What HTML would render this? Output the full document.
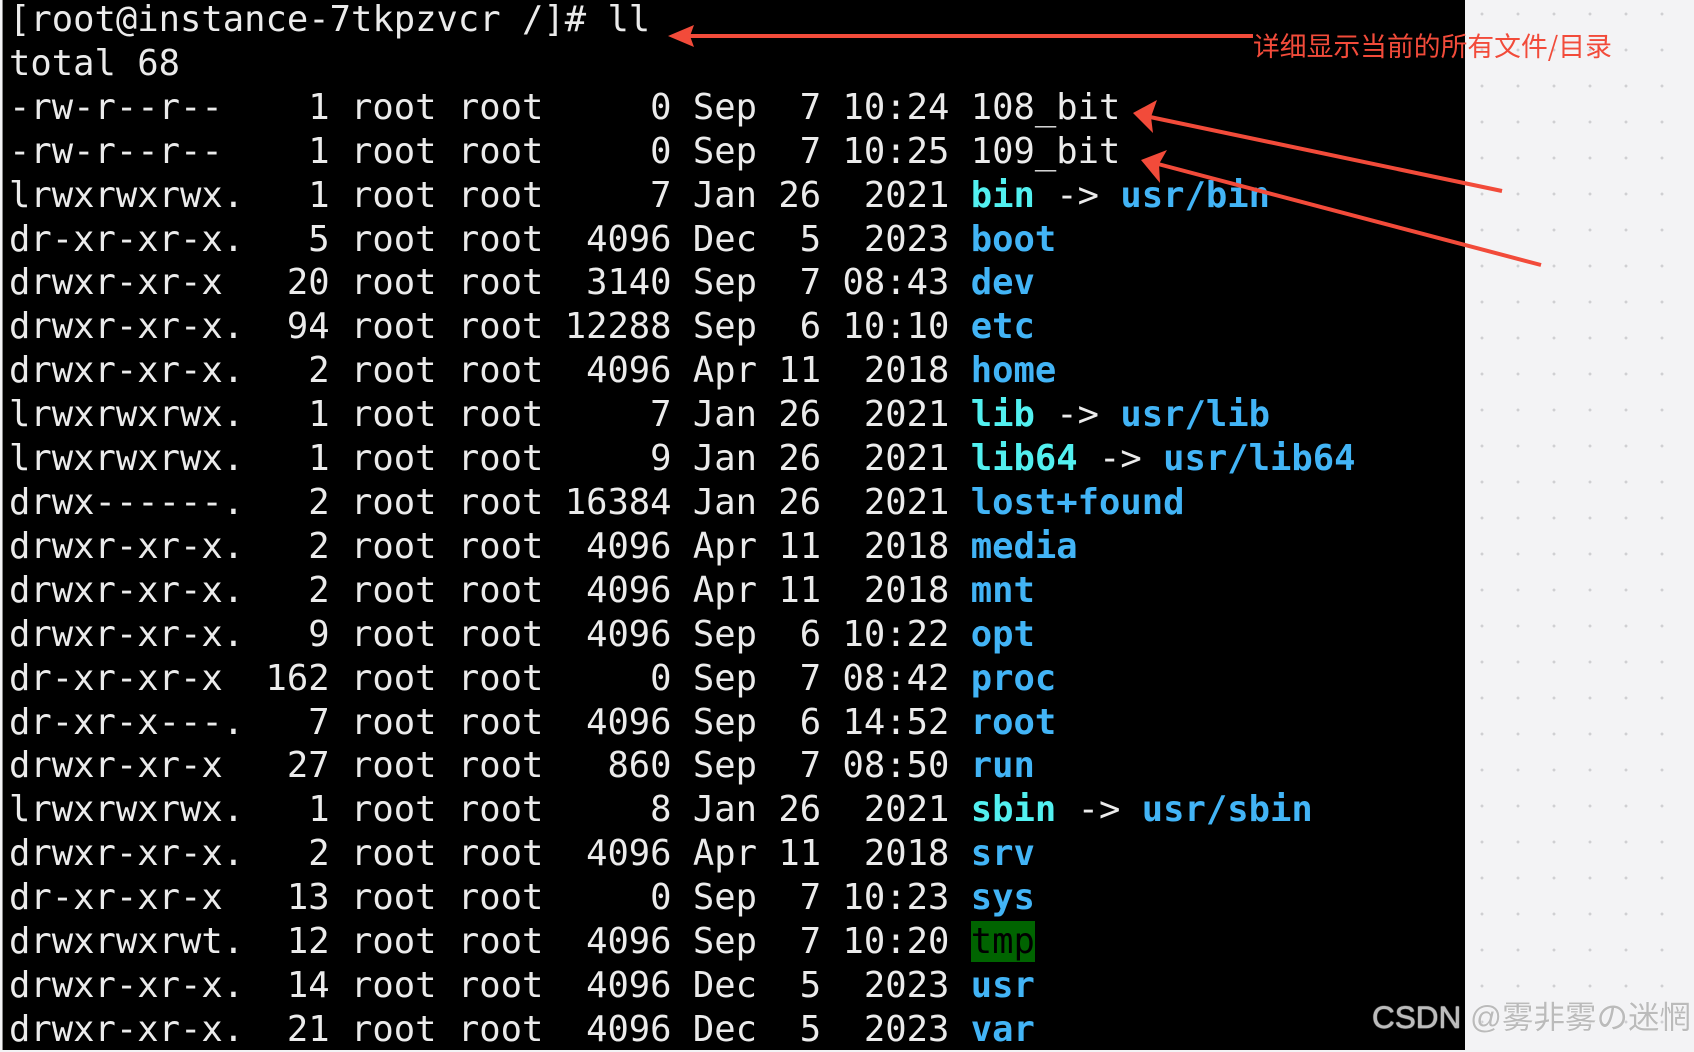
<!DOCTYPE html>
<html><head><meta charset="utf-8"><style>
html,body{margin:0;padding:0;width:1694px;height:1050px;overflow:hidden;background:#f3f3f5;}
#dots{position:absolute;left:1465px;top:0;width:229px;height:1050px;
background-image:radial-gradient(circle,#cfcfd2 1.3px,transparent 1.6px);
background-size:36px 36px;background-position:-1px -4px;}
#term{position:absolute;left:2px;top:0;width:1462px;height:1050px;background:#000;border-left:1px solid #888;}
pre{position:absolute;left:9px;top:-2px;margin:0;font-family:"DejaVu Sans Mono","Liberation Mono",monospace;font-size:35.5px;line-height:43.9px;color:#ebebeb;}
.d{color:#42b4f6;font-weight:bold}
.l{color:#52f0f0;font-weight:bold}
.t{color:#42b4f6;font-weight:bold}
.g{background:#006400;color:#000}
#note{position:absolute;left:1253px;top:28px;font-family:"Noto Sans CJK SC",sans-serif;font-size:26.8px;line-height:34px;color:#f24b3a;white-space:nowrap}
#wm{position:absolute;left:1372px;top:997px;font-family:"Liberation Sans","Noto Sans CJK JP",sans-serif;font-size:31.5px;line-height:40px;color:#bbb;white-space:nowrap;text-shadow:0 0 1px #fff,0 0 1px #fff;}
svg{position:absolute;left:0;top:0}
</style></head><body>
<div id="dots"></div>
<div id="term"></div>
<pre>[root@instance-7tkpzvcr /]# ll
total 68
-rw-r--r--    1 root root     0 Sep  7 10:24 108_bit
-rw-r--r--    1 root root     0 Sep  7 10:25 109_bit
lrwxrwxrwx.   1 root root     7 Jan 26  2021 <span class="l">bin</span> -&gt; <span class="t">usr/bin</span>
dr-xr-xr-x.   5 root root  4096 Dec  5  2023 <span class="d">boot</span>
drwxr-xr-x   20 root root  3140 Sep  7 08:43 <span class="d">dev</span>
drwxr-xr-x.  94 root root 12288 Sep  6 10:10 <span class="d">etc</span>
drwxr-xr-x.   2 root root  4096 Apr 11  2018 <span class="d">home</span>
lrwxrwxrwx.   1 root root     7 Jan 26  2021 <span class="l">lib</span> -&gt; <span class="t">usr/lib</span>
lrwxrwxrwx.   1 root root     9 Jan 26  2021 <span class="l">lib64</span> -&gt; <span class="t">usr/lib64</span>
drwx------.   2 root root 16384 Jan 26  2021 <span class="d">lost+found</span>
drwxr-xr-x.   2 root root  4096 Apr 11  2018 <span class="d">media</span>
drwxr-xr-x.   2 root root  4096 Apr 11  2018 <span class="d">mnt</span>
drwxr-xr-x.   9 root root  4096 Sep  6 10:22 <span class="d">opt</span>
dr-xr-xr-x  162 root root     0 Sep  7 08:42 <span class="d">proc</span>
dr-xr-x---.   7 root root  4096 Sep  6 14:52 <span class="d">root</span>
drwxr-xr-x   27 root root   860 Sep  7 08:50 <span class="d">run</span>
lrwxrwxrwx.   1 root root     8 Jan 26  2021 <span class="l">sbin</span> -&gt; <span class="t">usr/sbin</span>
drwxr-xr-x.   2 root root  4096 Apr 11  2018 <span class="d">srv</span>
dr-xr-xr-x   13 root root     0 Sep  7 10:23 <span class="d">sys</span>
drwxrwxrwt.  12 root root  4096 Sep  7 10:20 <span class="g">tmp</span>
drwxr-xr-x.  14 root root  4096 Dec  5  2023 <span class="d">usr</span>
drwxr-xr-x.  21 root root  4096 Dec  5  2023 <span class="d">var</span></pre>
<svg width="1694" height="1050">
<g stroke="#f24b3a" stroke-width="4" fill="none">
<line x1="1253" y1="36" x2="685" y2="36"/>
<line x1="1502" y1="191" x2="1150" y2="117"/>
<line x1="1541" y1="265" x2="1158" y2="164"/>
</g>
<g fill="#f24b3a">
<polygon points="668,36 694,25 690,36 694,47"/>
<polygon points="1133,113 1157,100 1151,117 1153,133"/>
<polygon points="1141,160 1167,150 1159,164 1160,183"/>
</g>
</svg>
<div id="note">详细显示当前的所有文件/目录</div>
<div id="wm">CSDN @雾非雾の迷惘</div>
</body></html>
